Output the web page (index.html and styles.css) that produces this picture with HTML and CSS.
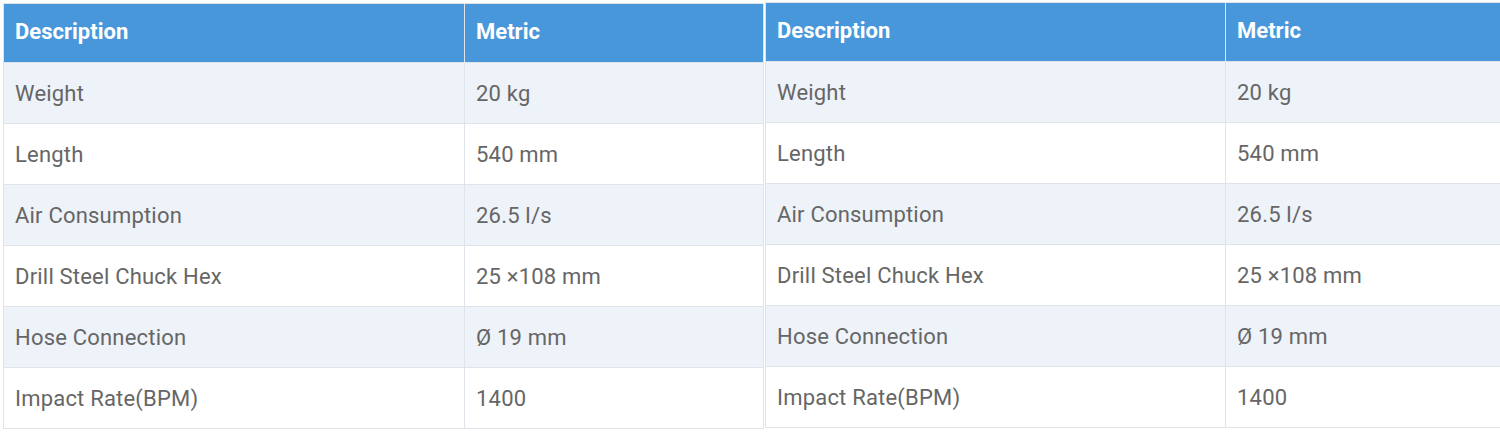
FILE: index.html
```html
<!DOCTYPE html>
<html>
<head>
<meta charset="utf-8">
<link rel="stylesheet" href="styles.css">
</head>
<body>
<div class="wrap">
  <table class="spec spec-left">
    <thead>
      <tr><th class="c1">Description</th><th class="c2">Metric</th></tr>
    </thead>
    <tbody>
      <tr><td>Weight</td><td>20 kg</td></tr>
      <tr><td>Length</td><td>540 mm</td></tr>
      <tr><td>Air Consumption</td><td>26.5 l/s</td></tr>
      <tr><td>Drill Steel Chuck Hex</td><td>25 ×108 mm</td></tr>
      <tr><td>Hose Connection</td><td>Ø 19 mm</td></tr>
      <tr><td>Impact Rate(BPM)</td><td>1400</td></tr>
    </tbody>
  </table>
  <table class="spec spec-right">
    <thead>
      <tr><th class="c1">Description</th><th class="c2">Metric</th></tr>
    </thead>
    <tbody>
      <tr><td>Weight</td><td>20 kg</td></tr>
      <tr><td>Length</td><td>540 mm</td></tr>
      <tr><td>Air Consumption</td><td>26.5 l/s</td></tr>
      <tr><td>Drill Steel Chuck Hex</td><td>25 ×108 mm</td></tr>
      <tr><td>Hose Connection</td><td>Ø 19 mm</td></tr>
      <tr><td>Impact Rate(BPM)</td><td>1400</td></tr>
    </tbody>
  </table>
</div>
</body>
</html>
```

FILE: styles.css
```css
html, body {
  margin: 0;
  padding: 0;
  background: #ffffff;
  overflow: hidden;
}
body {
  width: 1500px;
  height: 432px;
}
.wrap {
  display: flex;
  gap: 1px;
  padding: 2px 0 0 3px;
  align-items: flex-start;
}
.spec {
  flex: none;
  width: 761px;
  border-collapse: collapse;
  table-layout: fixed;
  font-family: Roboto, "Liberation Sans", sans-serif;
  font-size: 22px;
  letter-spacing: 0.2px;
  color: #666666;
  border: 1px solid #dfe4ea;
}
.spec-left {
  margin-top: 1px;
}
.spec th,
.spec td {
  box-sizing: border-box;
  padding: 0 11px;
  border: 1px solid #dfe4ea;
}
.spec .c1 {
  width: 461px;
}
.spec-right .c1 {
  width: 460px;
}
.spec th {
  background: #4897da;
  color: #ffffff;
  font-weight: 700;
  font-size: 22px;
  text-align: left;
  height: 59px;
  padding-bottom: 3px;
  letter-spacing: 0;
}
.spec td {
  height: 61px;
  vertical-align: middle;
}
.spec tbody tr:nth-child(odd) td {
  background: #eef2f9;
}
.spec tbody tr:nth-child(even) td {
  background: #ffffff;
}
```
